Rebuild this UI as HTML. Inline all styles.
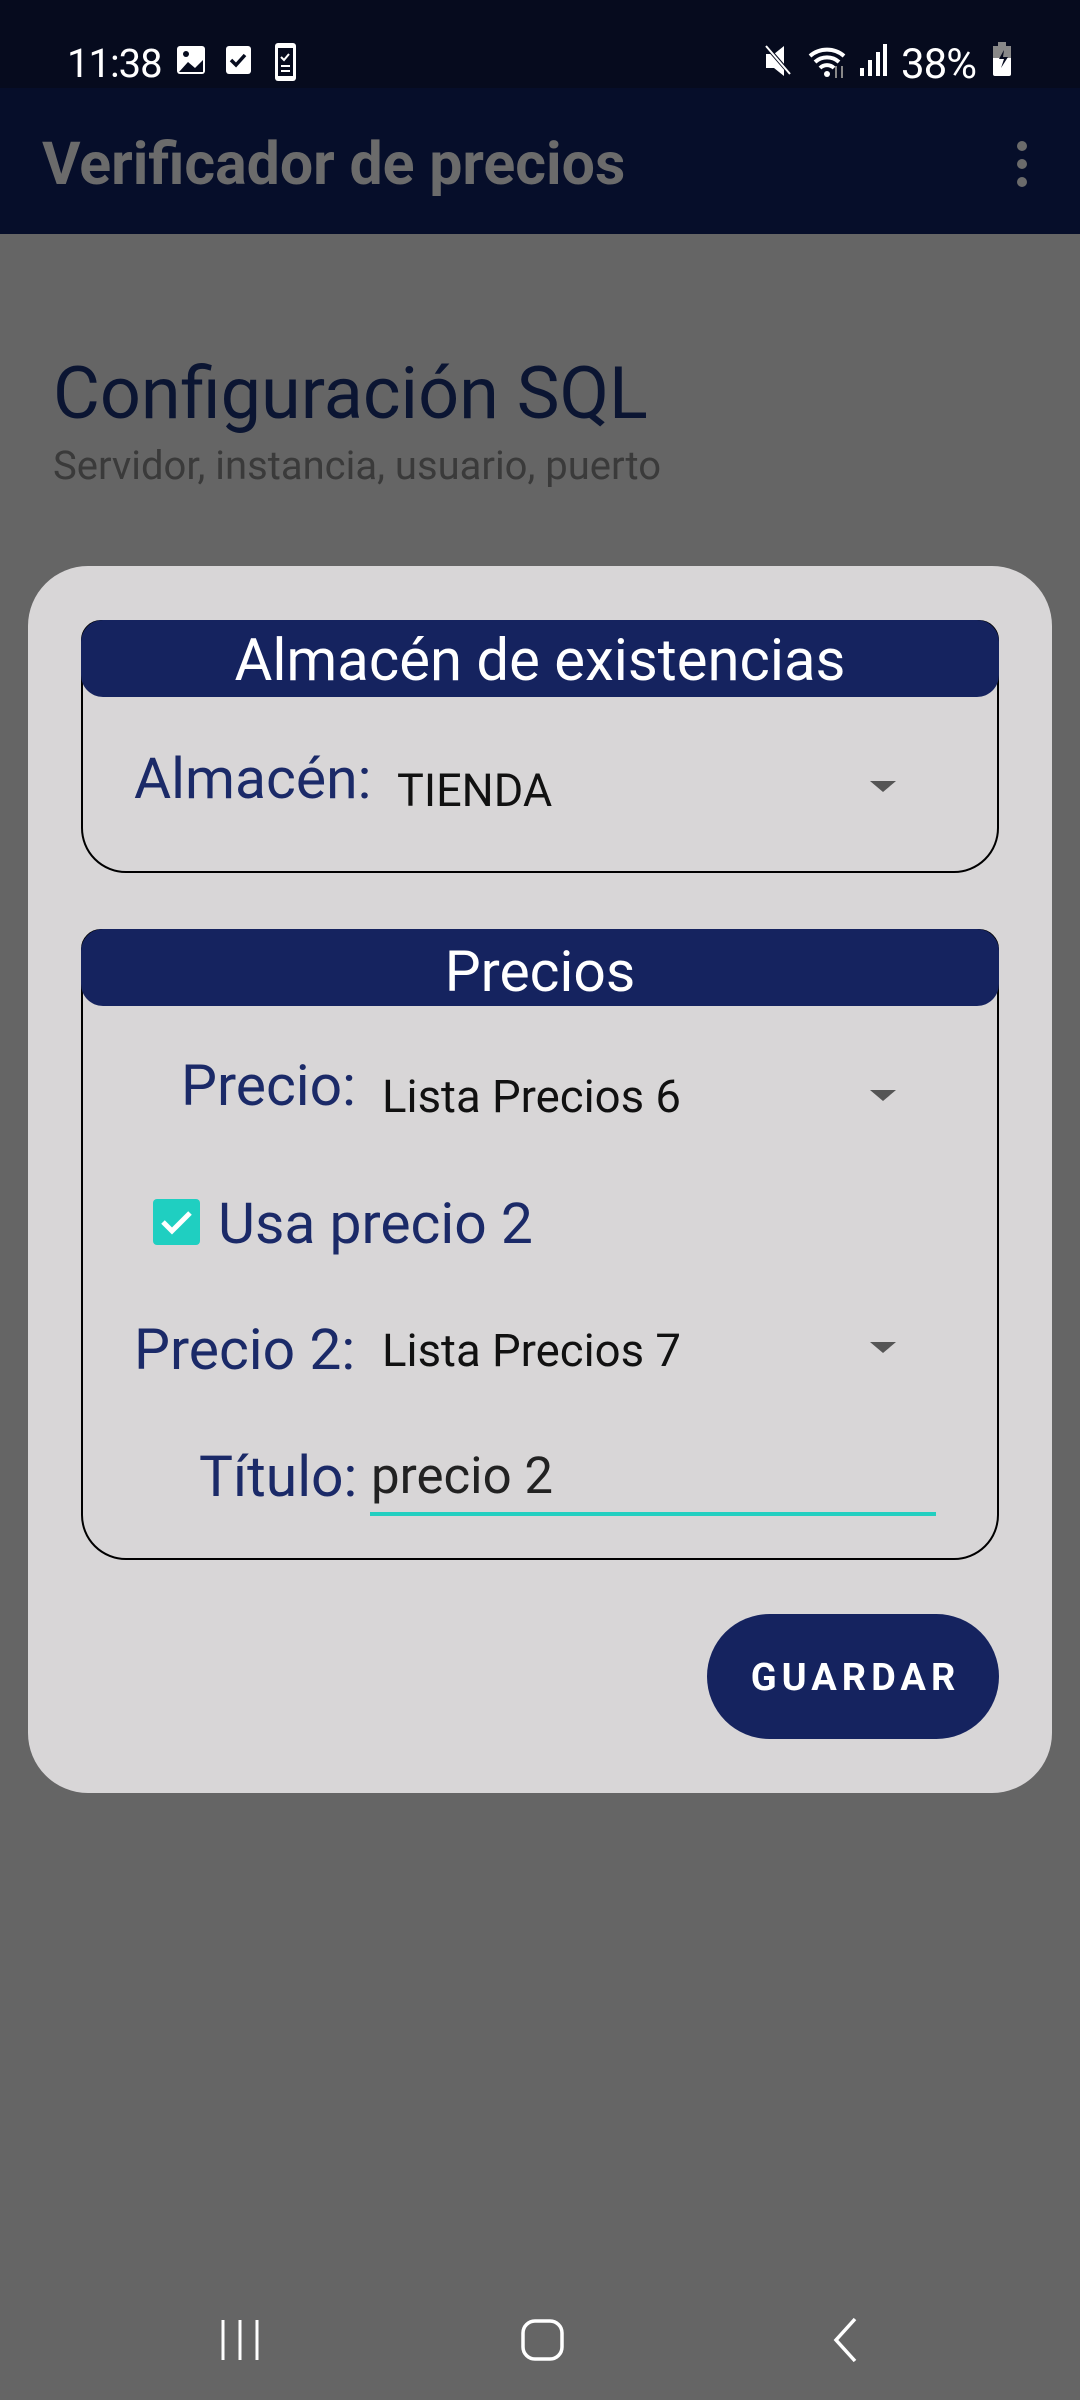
<!DOCTYPE html>
<html><head><meta charset="utf-8"><style>
*{margin:0;padding:0;box-sizing:border-box}
body{width:1080px;height:2400px;background:#656565;position:relative;overflow:hidden;font-family:"Roboto","Liberation Sans",sans-serif}
.a{position:absolute;line-height:1;white-space:nowrap}
.lbl{color:#1b2a68;font-size:57px}
.val{color:#111;font-size:45.5px}
.arrow{position:absolute;width:0;height:0;border-left:13px solid transparent;border-right:13px solid transparent;border-top:11px solid #555}
</style></head><body>
<div class="a" style="left:0;top:0;width:1080px;height:88px;background:#060b1e"></div>
<div class="a" style="left:0;top:88px;width:1080px;height:146px;background:#060e2a"></div>
<div class="a" style="left:67px;top:44px;font-size:40px;color:#fff;letter-spacing:-1px">11:38</div>
<svg class="a" style="left:0;top:0" width="1080" height="88">
<rect x="177" y="46" width="28" height="28" rx="3" fill="#fff"/>
<circle cx="186" cy="54" r="3" fill="#060b1e"/><path d="M179 72 L188 62 L195 68 L203 60 L203 72Z" fill="#060b1e"/>
<rect x="226" y="46" width="25" height="28" rx="3" fill="#fff"/><path d="M231 60 l5 5 l9 -10" stroke="#060b1e" stroke-width="3.5" fill="none"/>
<rect x="275" y="43" width="21" height="38" rx="3" fill="#fff"/><rect x="278" y="48" width="15" height="28" fill="#060b1e"/><path d="M281 57 l3 3 l5 -6" stroke="#fff" stroke-width="2" fill="none"/><path d="M281 66h9M281 71h9" stroke="#fff" stroke-width="2"/>
<path d="M766 54h8l10-8v30l-10-8h-8z" fill="#fff"/><path d="M766 46 L792 76" stroke="#060b1e" stroke-width="4"/><path d="M766 46 L790 74" stroke="#fff" stroke-width="2"/>
<path d="M810 56 a26 26 0 0 1 34 0 M815 62 a18 18 0 0 1 24 0 M820 68 a10 10 0 0 1 14 0" stroke="#fff" stroke-width="4" fill="none"/><circle cx="827" cy="74" r="3" fill="#fff"/>
<path d="M836 66v12M842 66v12" stroke="#888" stroke-width="2"/>
<rect x="860" y="68" width="4" height="8" fill="#fff"/><rect x="868" y="60" width="4" height="16" fill="#fff"/><rect x="876" y="52" width="4" height="24" fill="#fff"/><rect x="883" y="44" width="4" height="32" fill="#fff"/>
<rect x="993" y="46" width="18" height="30" rx="2" fill="#fff"/><rect x="998" y="42" width="8" height="5" fill="#888"/><rect x="993" y="46" width="18" height="12" fill="#888"/><path d="M1004 50 l-5 9 h5 l-3 9 l7-11 h-5z" fill="#060b1e"/>
</svg>
<div class="a" style="left:901px;top:44px;font-size:42px;color:#fff;letter-spacing:-1px">38%</div>
<div class="a" style="left:42px;top:135px;font-size:59px;color:#6b6b6b;font-weight:bold">Verificador de precios</div>
<div class="a" style="left:1017px;top:141px;width:10px;height:10px;border-radius:5px;background:#6b6b6b"></div>
<div class="a" style="left:1017px;top:159px;width:10px;height:10px;border-radius:5px;background:#6b6b6b"></div>
<div class="a" style="left:1017px;top:177px;width:10px;height:10px;border-radius:5px;background:#6b6b6b"></div>
<div class="a" style="left:53px;top:358px;font-size:72px;color:#0b1532">Configuración SQL</div>
<div class="a" style="left:53px;top:446px;font-size:40px;color:#3a3a3a">Servidor, instancia, usuario, puerto</div>

<div class="a" style="left:28px;top:566px;width:1024px;height:1227px;background:#d8d6d7;border-radius:60px"></div>

<div class="a" style="left:81px;top:620px;width:918px;height:253px;border:2.5px solid #000;border-radius:20px 20px 45px 45px"></div>
<div class="a" style="left:81px;top:620px;width:918px;height:77px;background:#15235f;border-radius:22px"></div>
<div class="a" style="left:81px;top:632px;width:918px;text-align:center;font-size:58px;color:#fff">Almacén de existencias</div>
<div class="a lbl" style="left:134px;top:750px">Almacén:</div>
<div class="a val" style="left:397px;top:768px;font-size:45px">TIENDA</div>
<div class="arrow" style="left:870px;top:781px"></div>

<div class="a" style="left:81px;top:929px;width:918px;height:631px;border:2.5px solid #000;border-radius:20px 20px 45px 45px"></div>
<div class="a" style="left:81px;top:929px;width:918px;height:77px;background:#15235f;border-radius:22px"></div>
<div class="a" style="left:81px;top:943px;width:918px;text-align:center;font-size:57px;color:#fff">Precios</div>

<div class="a lbl" style="left:181px;top:1057px">Precio:</div>
<div class="a val" style="left:382px;top:1075px">Lista Precios 6</div>
<div class="arrow" style="left:870px;top:1090px"></div>

<div class="a" style="left:153px;top:1199px;width:47px;height:46px;background:#1fcfc1;border-radius:4px"></div>
<svg class="a" style="left:153px;top:1199px" width="47" height="46"><path d="M10 23 l9 9 l18 -18" stroke="#fff" stroke-width="5" fill="none"/></svg>
<div class="a lbl" style="left:218px;top:1195px">Usa precio 2</div>

<div class="a lbl" style="left:134px;top:1321px">Precio 2:</div>
<div class="a val" style="left:382px;top:1329px">Lista Precios 7</div>
<div class="arrow" style="left:870px;top:1342px"></div>

<div class="a lbl" style="left:199px;top:1448px">Título:</div>
<div class="a" style="left:371px;top:1451px;font-size:51px;color:#222">precio 2</div>
<div class="a" style="left:370px;top:1512px;width:566px;height:4px;background:#22cfc0"></div>

<div class="a" style="left:707px;top:1614px;width:292px;height:125px;border-radius:63px;background:#15235f"></div>
<div class="a" style="left:707px;top:1659px;width:292px;text-align:center;font-size:38px;font-weight:bold;color:#fff;letter-spacing:5px;padding-left:5px">GUARDAR</div>

<svg class="a" style="left:0;top:2300px" width="1080" height="80">
<path d="M223 20v40M240 20v40M257 20v40" stroke="#fff" stroke-width="3"/>
<rect x="523" y="21" width="39" height="38" rx="12" stroke="#fff" stroke-width="3.5" fill="none"/>
<path d="M855 19 L836 40 L855 61" stroke="#fff" stroke-width="3.5" fill="none"/>
</svg>
</body></html>
